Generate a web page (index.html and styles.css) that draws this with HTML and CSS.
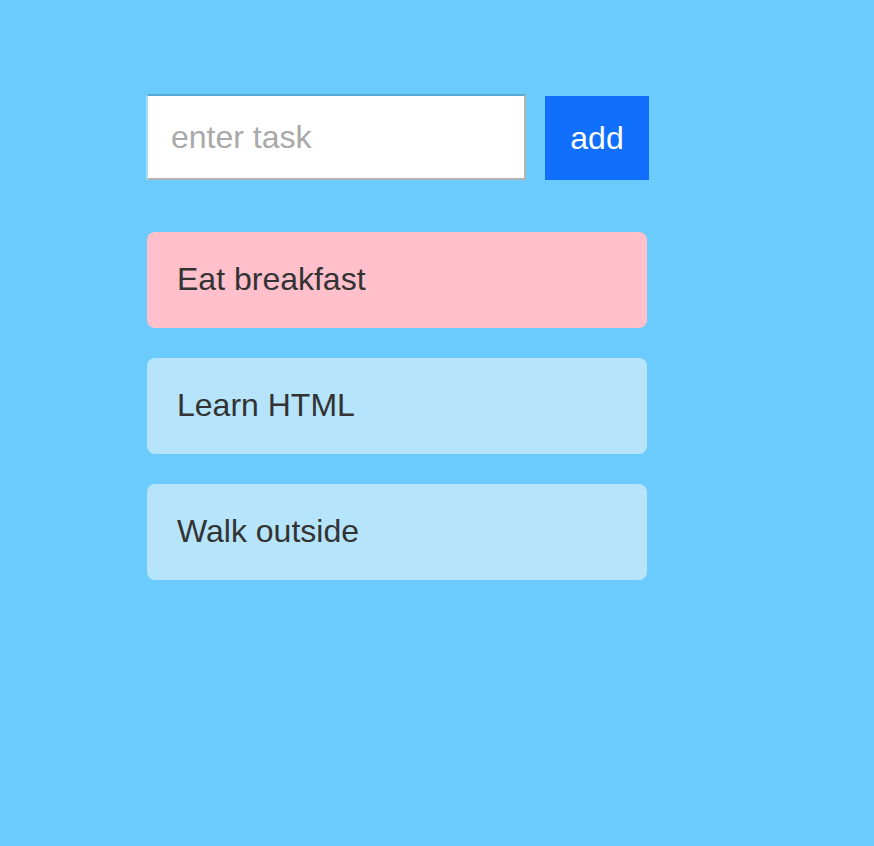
FILE: index.html
```html
<!DOCTYPE html>
<html lang="en">
<head>
<meta charset="utf-8">
<title>Todo</title>
<link rel="stylesheet" href="styles.css">
</head>
<body>
<main class="app">
  <form class="entry">
    <input class="entry-input" type="text" placeholder="enter task">
    <button class="entry-add" type="button">add</button>
  </form>
  <ul class="tasks">
    <li class="task task-active">Eat breakfast</li>
    <li class="task">Learn HTML</li>
    <li class="task">Walk outside</li>
  </ul>
</main>
</body>
</html>
```
FILE: styles.css
```css
html, body {
  margin: 0;
  padding: 0;
  background: #6ccbfd;
  min-height: 100%;
}
body {
  font-family: "Liberation Sans", Arial, Helvetica, sans-serif;
  color: #333333;
}
.app {
  padding: 94px 0 0 146px;
  display: flex;
  flex-direction: column;
  gap: 52px;
}
.entry {
  display: flex;
  align-items: flex-end;
  gap: 19px;
  margin: 0;
}
.entry-input {
  box-sizing: border-box;
  width: 380px;
  height: 86px;
  margin: 0;
  padding: 0 23px;
  font-family: inherit;
  font-size: 32px;
  color: #333;
  background: #ffffff;
  border-style: solid;
  border-width: 2px;
  border-top-color: #58a9d6;
  border-left-color: #a9dcf6;
  border-right-color: #b4b4b4;
  border-bottom-color: #b4b4b4;
  outline: none;
}
.entry-input::placeholder {
  color: #a9a9a9;
}
.entry-add {
  box-sizing: border-box;
  width: 104px;
  height: 84px;
  margin: 0;
  padding: 0;
  border: none;
  background: #116ffd;
  color: #ffffff;
  font-family: inherit;
  font-size: 32px;
}
.tasks {
  list-style: none;
  margin: 0 0 0 1px;
  padding: 0;
  display: flex;
  flex-direction: column;
  gap: 30px;
  width: 500px;
}
.task {
  box-sizing: border-box;
  height: 96px;
  padding: 29px 30px 31px;
  line-height: 36px;
  font-size: 32px;
  background: #b5e4fb;
  border-radius: 8px;
}
.task-active {
  background: #ffc0cb;
}
```
